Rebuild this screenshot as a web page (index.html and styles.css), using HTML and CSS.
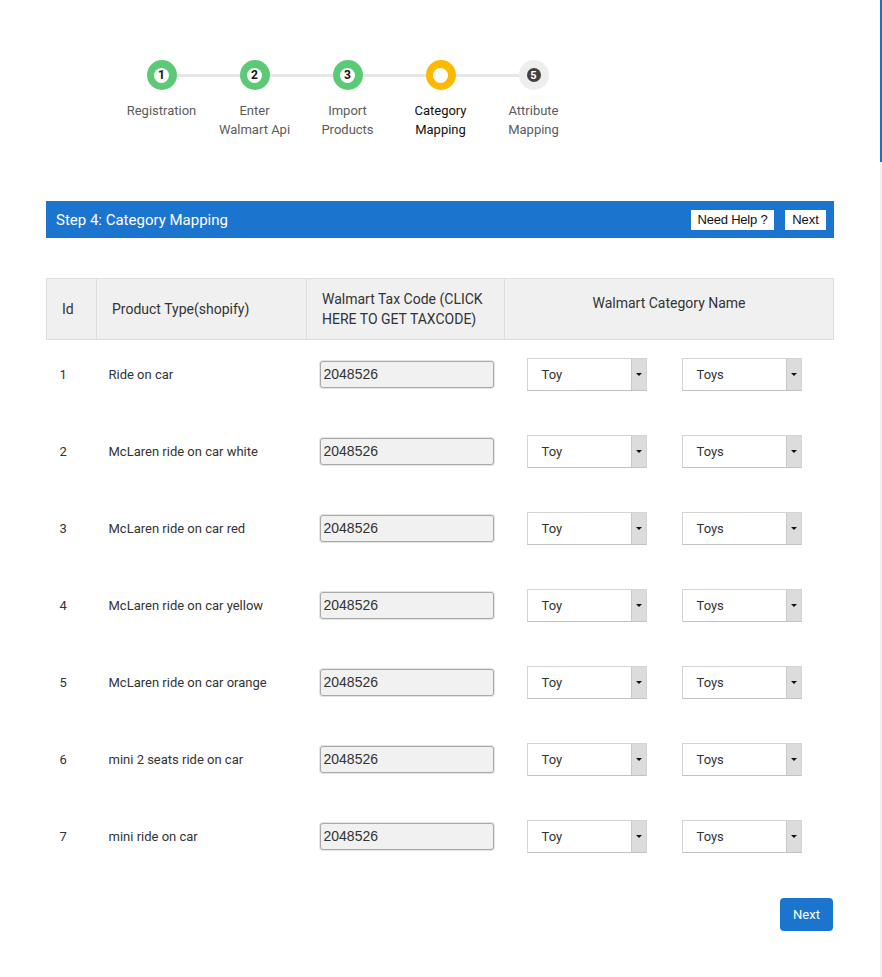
FILE: index.html
```html
<!DOCTYPE html>
<html>
<head>
<meta charset="utf-8">
<link rel="stylesheet" href="styles.css">
</head>
<body>
<div class="scrollbar"><div class="thumb"></div></div>
<div class="page">
  <div class="stepper">
    <div class="step done"><div class="dot"><span>1</span></div><div class="label">Registration</div></div>
    <div class="step done"><div class="dot"><span>2</span></div><div class="label">Enter<br>Walmart Api</div></div>
    <div class="step done"><div class="dot"><span>3</span></div><div class="label">Import<br>Products</div></div>
    <div class="step active"><div class="dot"><span></span></div><div class="label">Category<br>Mapping</div></div>
    <div class="step todo"><div class="dot"><span>5</span></div><div class="label">Attribute<br>Mapping</div></div>
  </div>

  <div class="bar">
    <div class="bar-title">Step 4: Category Mapping</div>
    <div class="bar-actions">
      <button class="bar-btn help">Need Help ?</button>
      <button class="bar-btn nxt">Next</button>
    </div>
  </div>

  <table class="map">
    <thead>
      <tr>
        <th class="c-id">Id</th>
        <th class="c-type">Product Type(shopify)</th>
        <th class="c-tax">Walmart Tax Code (CLICK HERE TO GET TAXCODE)</th>
        <th class="c-cat">Walmart Category Name</th>
      </tr>
    </thead>
    <tbody>
      <tr><td class="c-id">1</td><td class="c-type">Ride on car</td><td><div class="tax">2048526</div></td><td><div class="cats"><div class="sel"><span>Toy</span><i></i></div><div class="sel"><span>Toys</span><i></i></div></div></td></tr>
      <tr><td class="c-id">2</td><td class="c-type">McLaren ride on car white</td><td><div class="tax">2048526</div></td><td><div class="cats"><div class="sel"><span>Toy</span><i></i></div><div class="sel"><span>Toys</span><i></i></div></div></td></tr>
      <tr><td class="c-id">3</td><td class="c-type">McLaren ride on car red</td><td><div class="tax">2048526</div></td><td><div class="cats"><div class="sel"><span>Toy</span><i></i></div><div class="sel"><span>Toys</span><i></i></div></div></td></tr>
      <tr><td class="c-id">4</td><td class="c-type">McLaren ride on car yellow</td><td><div class="tax">2048526</div></td><td><div class="cats"><div class="sel"><span>Toy</span><i></i></div><div class="sel"><span>Toys</span><i></i></div></div></td></tr>
      <tr><td class="c-id">5</td><td class="c-type">McLaren ride on car orange</td><td><div class="tax">2048526</div></td><td><div class="cats"><div class="sel"><span>Toy</span><i></i></div><div class="sel"><span>Toys</span><i></i></div></div></td></tr>
      <tr><td class="c-id">6</td><td class="c-type">mini 2 seats ride on car</td><td><div class="tax">2048526</div></td><td><div class="cats"><div class="sel"><span>Toy</span><i></i></div><div class="sel"><span>Toys</span><i></i></div></div></td></tr>
      <tr><td class="c-id">7</td><td class="c-type">mini ride on car</td><td><div class="tax">2048526</div></td><td><div class="cats"><div class="sel"><span>Toy</span><i></i></div><div class="sel"><span>Toys</span><i></i></div></div></td></tr>
    </tbody>
  </table>

  <div class="footer">
    <button class="next-btn">Next</button>
  </div>
</div>
</body>
</html>
```

FILE: styles.css
```css
html, body {
  margin: 0;
  padding: 0;
  background: #fff;
}
body {
  font-family: Roboto, "Liberation Sans", Arial, sans-serif;
  color: #333;
}
.scrollbar {
  position: fixed;
  top: 0;
  right: 0;
  width: 2px;
  height: 100%;
  background: #f1f1f1;
}
.scrollbar .thumb {
  height: 162px;
  background: #1275c7;
}
.page {
  width: 788px;
  margin-left: 46px;
  padding-top: 60px;
}

/* stepper */
.stepper {
  display: flex;
  margin-left: 69px;
}
.step {
  width: 93px;
  display: flex;
  flex-direction: column;
  align-items: center;
  position: relative;
}
.step + .step::before {
  content: "";
  position: absolute;
  top: 14px;
  left: -46px;
  width: 93px;
  height: 3px;
  background: #e6e6e6;
  z-index: 0;
}
.dot {
  width: 30px;
  height: 30px;
  border-radius: 50%;
  display: flex;
  align-items: center;
  justify-content: center;
  position: relative;
  z-index: 1;
}
.dot span {
  width: 15px;
  height: 15px;
  border-radius: 50%;
  background: #fff;
  display: flex;
  align-items: center;
  justify-content: center;
  font-size: 12px;
  font-weight: bold;
  color: #111;
  line-height: 1;
}
.done .dot { background: #5cc977; }
.active .dot { background: #fbba00; }
.todo .dot { background: #eeeeee; }
.todo .dot span {
  background: #453f3d;
  color: #fff;
  width: 14px;
  height: 14px;
  font-size: 11px;
}
.label {
  margin-top: 11px;
  font-size: 13px;
  line-height: 19px;
  text-align: center;
  color: #5b5b5b;
  white-space: nowrap;
}
.active .label { color: #111; }

/* blue bar */
.bar {
  margin-top: 62px;
  height: 37px;
  background: #1b75cf;
  display: flex;
  align-items: center;
  justify-content: space-between;
  padding: 0 8px 0 10px;
}
.bar-title {
  color: #fff;
  font-size: 15px;
}
.bar-actions {
  display: flex;
  gap: 11px;
}
.bar-btn {
  border: none;
  background: #fff;
  color: #111;
  font-family: "Liberation Sans", Arial, sans-serif;
  font-size: 13px;
  height: 20px;
  padding: 0;
  line-height: 20px;
  border-radius: 0;
  text-align: center;
}
.bar-btn.help { width: 83px; letter-spacing: -0.2px; }
.bar-btn.nxt { width: 41px; }

/* table */
.map {
  margin-top: 40px;
  width: 788px;
  border-collapse: collapse;
  table-layout: fixed;
}
.map th {
  background: #f0f0f0;
  border: 1px solid #dedede;
  height: 61px;
  padding: 0 15px;
  text-align: left;
  font-weight: normal;
  font-size: 14px;
  line-height: 20px;
  color: #333;
  box-sizing: border-box;
}
.map th.c-id { width: 50px; }
.map th.c-type { width: 210px; }
.map th.c-tax { width: 198px; }
.map th.c-cat {
  text-align: center;
  padding-bottom: 12px;
}
.map td {
  height: 77px;
  padding: 0 12px 7px 13px;
  font-size: 13px;
  color: #333;
  vertical-align: middle;
  box-sizing: border-box;
}
.map td.c-type { padding-left: 12px; }
.tax {
  width: 174px;
  height: 27px;
  box-sizing: border-box;
  background: #f1f1f1;
  border: 1px solid #a9a9a9;
  border-radius: 3px;
  box-shadow: 0 0 0 1px #e4e4e4;
  font-family: "Liberation Sans", Arial, sans-serif;
  font-size: 14px;
  color: #333;
  line-height: 25px;
  padding-left: 3px;
}
.cats {
  display: flex;
  gap: 35px;
  padding-left: 9px;
}
.sel {
  width: 120px;
  height: 33px;
  box-sizing: border-box;
  border: 1px solid #d4d4d4;
  border-bottom-color: #c2c2c2;
  background: #fff;
  display: flex;
  align-items: stretch;
}
.sel span {
  flex: 1;
  padding-left: 14px;
  line-height: 31px;
  font-size: 13px;
  color: #333;
}
.sel i {
  width: 14px;
  background: #dcdcdc;
  border-left: 1px solid #c8c8c8;
  position: relative;
}
.sel i::after {
  content: "";
  position: absolute;
  left: 4px;
  top: 14px;
  border-left: 3px solid transparent;
  border-right: 3px solid transparent;
  border-top: 3px solid #111;
}

.footer {
  display: flex;
  justify-content: flex-end;
  padding-top: 19px;
  padding-right: 1px;
}
.next-btn {
  background: #1b75cf;
  color: #fff;
  border: none;
  border-radius: 4px;
  width: 53px;
  height: 33px;
  font-family: Roboto, Arial, sans-serif;
  font-size: 13px;
}
```
